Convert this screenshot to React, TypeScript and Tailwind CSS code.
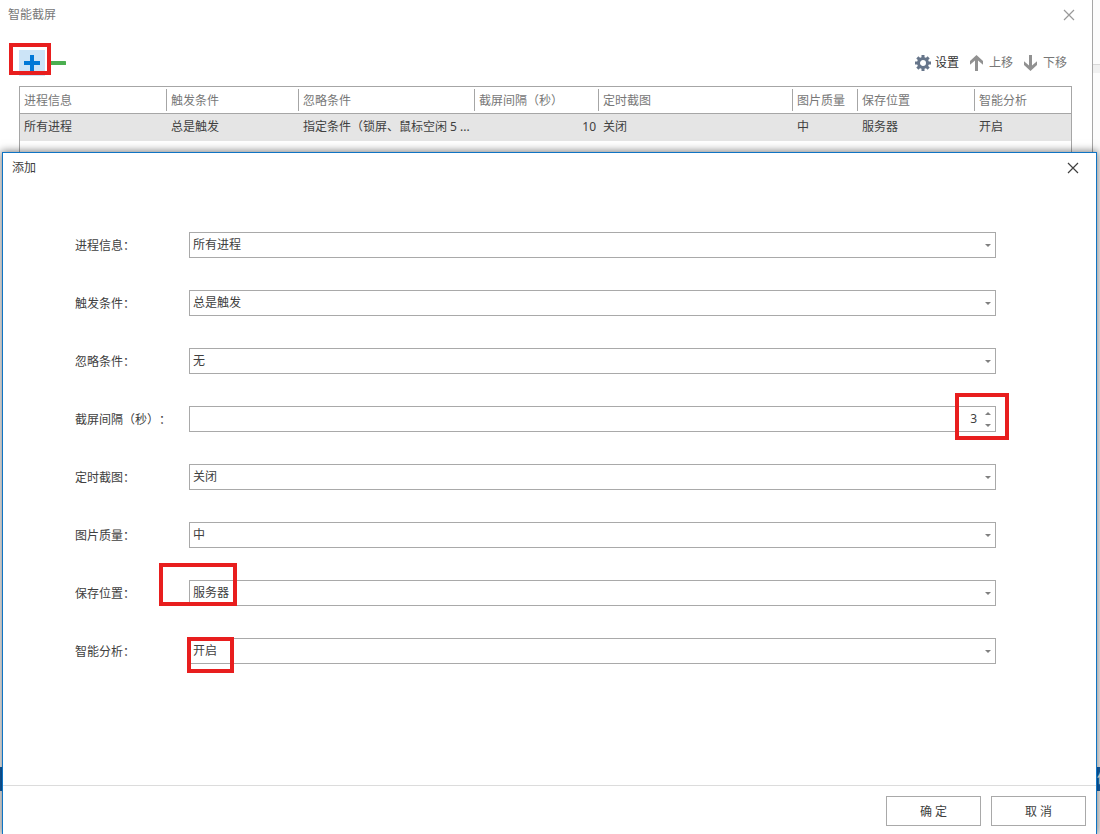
import React from "react";

type Field = {
  id: string;
  label: string;
  value: string;
  kind?: "number";
  highlight?: string;
};

const fields: Field[] = [
  { id: "process", label: "进程信息：", value: "所有进程" },
  { id: "trigger", label: "触发条件：", value: "总是触发" },
  { id: "ignore", label: "忽略条件：", value: "无" },
  {
    id: "interval",
    label: "截屏间隔（秒）：",
    value: "3",
    kind: "number",
    highlight: "-right-[13px] -top-[13px] h-[47px] w-[54px]",
  },
  { id: "timer", label: "定时截图：", value: "关闭" },
  { id: "quality", label: "图片质量：", value: "中" },
  {
    id: "location",
    label: "保存位置：",
    value: "服务器",
    highlight: "-left-[30px] -top-[17px] h-[43px] w-[78px]",
  },
  {
    id: "analysis",
    label: "智能分析：",
    value: "开启",
    highlight: "-left-[2px] -top-px h-[36px] w-[47px]",
  },
];

const columns = [
  { title: "进程信息", value: "所有进程", width: "w-[147px]" },
  { title: "触发条件", value: "总是触发", width: "w-[132px]" },
  { title: "忽略条件", value: "指定条件（锁屏、鼠标空闲 5 ...", width: "w-[176px]" },
  { title: "截屏间隔（秒）", value: "10", width: "w-[124px]", right: true },
  { title: "定时截图", value: "关闭", width: "w-[194px]" },
  { title: "图片质量", value: "中", width: "w-[65px]" },
  { title: "保存位置", value: "服务器", width: "w-[117px]" },
  { title: "智能分析", value: "开启", width: "" },
];

function Highlight({ place }: { place: string }) {
  return (
    <span
      aria-hidden="true"
      className={`pointer-events-none absolute z-10 border-4 border-[#e81e1e] ${place}`}
    />
  );
}

function CloseIcon() {
  return (
    <svg width="12" height="12" viewBox="0 0 12 12" fill="none" stroke="currentColor" strokeWidth="1.2">
      <path d="M1 1 11 11M11 1 1 11" />
    </svg>
  );
}

function GearIcon() {
  return (
    <svg width="16" height="16" viewBox="0 0 16 16" className="text-[#66758a]">
      {[0, 45, 90, 135, 180, 225, 270, 315].map((a) => (
        <rect key={a} x="6.5" y="0" width="3" height="4" fill="currentColor" transform={`rotate(${a} 8 8)`} />
      ))}
      <circle cx="8" cy="8" r="4.5" fill="none" stroke="currentColor" strokeWidth="3" />
    </svg>
  );
}

function ArrowIcon({ down }: { down?: boolean }) {
  return (
    <svg width="16" height="16" viewBox="0 0 16 16" className="text-[#919191]">
      <path
        d={
          down
            ? "M6 0h3v10.6L14 6.2V10L7.5 16 1 10V6.2l5 4.4z"
            : "M6 16h3V5.4l5 4.4V6L7.5 0 1 6v3.8l5-4.4z"
        }
        fill="currentColor"
      />
    </svg>
  );
}

function Caret({ up }: { up?: boolean }) {
  return (
    <svg width="6" height="3" viewBox="0 0 6 3" className="text-[#808080]">
      <path d={up ? "M0 3h6L3 0z" : "M0 0h6L3 3z"} fill="currentColor" />
    </svg>
  );
}

function Row({ field }: { field: Field }) {
  return (
    <div className="flex items-center">
      <label htmlFor={field.id} className="w-[114px] shrink-0 pt-px">
        {field.label}
      </label>
      <div className="relative h-[26px] grow">
        {field.kind === "number" ? (
          <div className="flex h-full border border-[#a9a9a9]">
            <input
              id={field.id}
              type="text"
              inputMode="numeric"
              defaultValue={field.value}
              className="min-w-0 grow bg-transparent pr-1 text-right outline-none"
            />
            <div className="flex w-[14px] flex-col">
              <button type="button" aria-label="增加" className="flex h-3 items-center justify-center">
                <Caret up />
              </button>
              <button type="button" aria-label="减少" className="flex h-3 items-center justify-center">
                <Caret />
              </button>
            </div>
          </div>
        ) : (
          <>
            <select
              id={field.id}
              defaultValue={field.value}
              className="block h-full w-full appearance-none rounded-none border border-[#a9a9a9] bg-white pl-[3px] pr-5 outline-none"
            >
              <option>{field.value}</option>
            </select>
            <span className="pointer-events-none absolute inset-y-0 right-[5px] flex items-center">
              <Caret />
            </span>
          </>
        )}
        {field.highlight && <Highlight place={field.highlight} />}
      </div>
    </div>
  );
}

export default function App() {
  return (
    <div className="relative flex min-h-screen flex-col overflow-hidden bg-white font-['Noto_Sans','Noto_Sans_CJK_SC',sans-serif] text-xs text-[#404040] [text-spacing-trim:space-all]">
      <div className="flex grow">
        <main className="flex min-w-0 grow flex-col border-r border-[#a6a6a6]">
          <header className="flex h-[30px] items-center justify-between pl-2 pr-[17px] text-[#777]">
            <h1>智能截屏</h1>
            <button type="button" aria-label="关闭" className="text-[#999]">
              <CloseIcon />
            </button>
          </header>

          <div className="flex items-center justify-between pb-[10px] pl-[19px] pr-[25px] pt-5">
            <div className="flex">
              <div className="relative">
                <button
                  type="button"
                  aria-label="添加"
                  className="flex size-[26px] items-center justify-center bg-[#cce4f7]"
                >
                  <svg width="16" height="16" viewBox="0 0 16 16" fill="#0078d7">
                    <path d="M6 0h4v6h6v4h-6v6H6v-6H0V6h6z" />
                  </svg>
                </button>
                <Highlight place="-left-[10px] -top-[7px] h-8 w-[42px]" />
              </div>
              <button type="button" aria-label="删除" className="flex size-[26px] items-center justify-center">
                <svg width="16" height="4" viewBox="0 0 16 4">
                  <rect width="16" height="4" rx="0.5" fill="#4caf50" />
                </svg>
              </button>
            </div>
            <div className="flex gap-[10px] text-[#777]">
              <button type="button" className="flex items-center gap-1 text-[#333]">
                <GearIcon />
                设置
              </button>
              <button type="button" className="flex items-center gap-1">
                <ArrowIcon />
                上移
              </button>
              <button type="button" className="flex items-center gap-1">
                <ArrowIcon down />
                下移
              </button>
            </div>
          </div>

          <div className="ml-[19px] mr-5 grow border border-b-0 border-[#a6a6a6]">
            <table className="w-full table-fixed border-collapse">
              <thead>
                <tr className="border-b border-[#a6a6a6] text-[#777]">
                  {columns.map((c, i) => (
                    <th key={c.title} className={`h-[26px] p-0 text-left font-normal ${c.width}`}>
                      <div
                        className={`h-[22px] whitespace-nowrap pl-1 leading-6 ${
                          i < columns.length - 1 ? "border-r border-[#a6a6a6]" : ""
                        }`}
                      >
                        {c.title}
                      </div>
                    </th>
                  ))}
                </tr>
              </thead>
              <tbody>
                <tr className="bg-[#e5e5e5]">
                  {columns.map((c) => (
                    <td
                      key={c.title}
                      className={`h-7 overflow-hidden whitespace-nowrap py-0 pl-1 ${
                        c.right ? "pr-[3px] text-right" : "pr-0"
                      }`}
                    >
                      {c.value}
                    </td>
                  ))}
                </tr>
              </tbody>
            </table>
          </div>
        </main>
        <aside className="w-[7px] shrink-0 bg-[#fcfcfc] pt-16">
          <div className="h-[9px] border-t border-[#d8d8d8] bg-[#f0f0f0]" />
        </aside>
      </div>
      <div className="flex h-6 items-center justify-end overflow-hidden bg-[#1064b4] text-white">
        <span className="w-[3px] whitespace-nowrap">信</span>
      </div>
      <div className="h-[43px] bg-[#f4f4f4]" />

      <section
        role="dialog"
        aria-labelledby="dialog-title"
        className="absolute bottom-0 left-[2px] right-[3px] top-[152px] flex flex-col border border-b-0 border-[#0f74c4] bg-white shadow-[0_0_8px_1px_rgba(0,0,0,0.5)]"
      >
        <header className="flex h-[30px] shrink-0 items-center justify-between pl-[9px] pr-[17px]">
          <h2 id="dialog-title">添加</h2>
          <button type="button" aria-label="关闭" className="text-[#404040]">
            <CloseIcon />
          </button>
        </header>
        <form className="flex grow flex-col gap-8 pl-[72px] pr-[100px] pt-[49px]">
          {fields.map((f) => (
            <Row key={f.id} field={f} />
          ))}
        </form>
        <footer className="flex justify-end gap-[10px] border-t border-[#dcdcdc] px-[10px] pb-2 pt-[10px]">
          <button type="button" className="h-[30px] w-[95px] border border-[#a9a9a9] pt-px">
            确 定
          </button>
          <button type="button" className="h-[30px] w-[95px] border border-[#a9a9a9] pt-px">
            取 消
          </button>
        </footer>
      </section>
    </div>
  );
}
